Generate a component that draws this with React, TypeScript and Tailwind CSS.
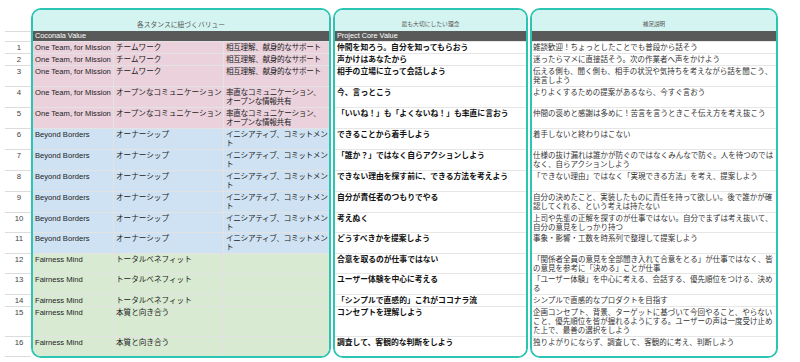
import React from 'react';

type Row = {
  a: string;
  b: string;
  c: string;
  d: string;
  e: string;
  bg: string;
  h: string;
};

const PINK = 'bg-[#ead1dc]';
const BLUE = 'bg-[#cfe2f3]';
const GREEN = 'bg-[#d9ead3]';

const OT = 'One Team, for Mission';
const BB = 'Beyond Borders';
const FM = 'Fairness Mind';
const INI = 'イニシアティブ、コミットメン\nト';
const OPEN = '率直なコミュニケーション、\nオープンな情報共有';

const rows: Row[] = [
  { a: OT, b: 'チームワーク', c: '相互理解、献身的なサポート', d: '仲間を知ろう。自分を知ってもらおう', e: '雑談歓迎！ちょっとしたことでも普段から話そう', bg: PINK, h: 'h-[12px]' },
  { a: OT, b: 'チームワーク', c: '相互理解、献身的なサポート', d: '声かけはあなたから', e: '迷ったらマメに直接話そう。次の作業者へ声をかけよう', bg: PINK, h: 'h-[12px]' },
  { a: OT, b: 'チームワーク', c: '相互理解、献身的なサポート', d: '相手の立場に立って会話しよう', e: '伝える側も、聞く側も、相手の状況や気持ちを考えながら話を聞こう、\n発言しよう', bg: PINK, h: 'h-[21px]' },
  { a: OT, b: 'オープンなコミュニケーション', c: OPEN, d: '今、言っとこう', e: 'よりよくするための提案があるなら、今すぐ言おう', bg: PINK, h: 'h-[21px]' },
  { a: OT, b: 'オープンなコミュニケーション', c: OPEN, d: '「いいね！」も「よくないね！」も率直に言おう', e: '仲間の褒めと感謝は多めに！苦言を言うときこそ伝え方を考え抜こう', bg: PINK, h: 'h-[21px]' },
  { a: BB, b: 'オーナーシップ', c: INI, d: 'できることから着手しよう', e: '着手しないと終わりはこない', bg: BLUE, h: 'h-[21px]' },
  { a: BB, b: 'オーナーシップ', c: INI, d: '「誰か？」ではなく自らアクションしよう', e: '仕様の抜け漏れは誰かが防ぐのではなくみんなで防ぐ。人を待つのでは\nなく、自らアクションしよう', bg: BLUE, h: 'h-[21px]' },
  { a: BB, b: 'オーナーシップ', c: INI, d: 'できない理由を探す前に、できる方法を考えよう', e: '「できない理由」ではなく「実現できる方法」を考え、提案しよう', bg: BLUE, h: 'h-[21px]' },
  { a: BB, b: 'オーナーシップ', c: INI, d: '自分が責任者のつもりでやる', e: '自分の決めたこと、実装したものに責任を持って欲しい。後で誰かが確\n認してくれる、という考えは持たない', bg: BLUE, h: 'h-[21px]' },
  { a: BB, b: 'オーナーシップ', c: INI, d: '考えぬく', e: '上司や先輩の正解を探すのが仕事ではない。自分でまずは考え抜いて、\n自分の意見をしっかり持つ', bg: BLUE, h: 'h-[20px]' },
  { a: BB, b: 'オーナーシップ', c: INI, d: 'どうすべきかを提案しよう', e: '事象・影響・工数を時系列で整理して提案しよう', bg: BLUE, h: 'h-[21px]' },
  { a: FM, b: 'トータルベネフィット', c: '', d: '合意を取るのが仕事ではない', e: '「関係者全員の意見を全部聞き入れて合意をとる」が仕事ではなく、皆\nの意見を参考に「決める」ことが仕事', bg: GREEN, h: 'h-[20px]' },
  { a: FM, b: 'トータルベネフィット', c: '', d: 'ユーザー体験を中心に考える', e: '「ユーザー体験」を中心に考える、会話する、優先順位をつける、決め\nる', bg: GREEN, h: 'h-[21px]' },
  { a: FM, b: 'トータルベネフィット', c: '', d: '「シンプルで直感的」これがココナラ流', e: 'シンプルで直感的なプロダクトを目指す', bg: GREEN, h: 'h-[12px]' },
  { a: FM, b: '本質と向き合う', c: '', d: 'コンセプトを理解しよう', e: '企画コンセプト、背景、ターゲットに基づいて今回やること、やらない\nこと、優先順位を皆が握れるようにする。ユーザーの声は一度受け止め\nた上で、最善の選択をしよう', bg: GREEN, h: 'h-[30px]' },
  { a: FM, b: '本質と向き合う', c: '', d: '調査して、客観的な判断をしよう', e: '独りよがりにならず、調査して、客観的に考え、判断しよう', bg: GREEN, h: 'h-[20px]' },
];

function Cell({ text, className }: { text: string; className: string }) {
  return (
    <div className={`overflow-hidden whitespace-pre pt-[1px] ${className}`}>
      {text}
    </div>
  );
}

function GroupHeader({ title, size }: { title: string; size: string }) {
  return (
    <div className={`h-[21px] bg-[#d4f4f1] flex items-end justify-center pb-[2px] text-[#555] ${size}`}>
      {title}
    </div>
  );
}

export default function App() {
  return (
    <div className="w-[800px] h-[362px] bg-white overflow-hidden flex items-start pt-[8px] font-['Liberation_Sans','Noto_Sans_CJK_JP',sans-serif] text-[7.6px] leading-[9px] text-[#222]">
      {/* row numbers */}
      <div className="w-[31px] shrink-0 flex flex-col pl-[5px]">
        <div className="h-[23px]" />
        <div className="h-[10px] border-t border-[#dcdcdc]" />
        {rows.map((r, i) => (
          <div
            key={i}
            className={`${r.h} border-t border-[#dcdcdc] flex justify-center items-start pt-[1px] pl-[2px] text-[#444] text-[7.8px]`}
          >
            {i + 1}
          </div>
        ))}
        <div className="border-t border-[#dcdcdc]" />
      </div>

      {/* group 1 */}
      <div className="w-[300px] shrink-0 rounded-[10px] border-2 border-[#2cc5b3] overflow-hidden flex flex-col">
        <GroupHeader title="各スタンスに紐づくバリュー" size="text-[6.8px]" />
        <div className="h-[10px] bg-[#595959] text-white text-[7.3px] leading-[10px] pl-[2px]">Coconala Value</div>
        {rows.map((r, i) => (
          <div key={i} className={`${r.h} ${r.bg} border-t border-[#e3e3e3] flex`}>
            <Cell text={r.a} className="w-[80px] pl-[2px]" />
            <Cell text={r.b} className="w-[110px] pl-[2px] border-l border-[#e3e3e3]" />
            <Cell text={r.c} className="flex-1 pl-[2px] border-l border-[#e3e3e3] tracking-[-0.3px]" />
          </div>
        ))}
      </div>

      {/* group 2 */}
      <div className="w-[195px] ml-[2px] shrink-0 rounded-[10px] border-2 border-[#2cc5b3] overflow-hidden flex flex-col">
        <GroupHeader title="最も大切にしたい理念" size="text-[5.8px]" />
        <div className="h-[10px] bg-[#595959] text-white text-[7.3px] leading-[10px] pl-[2px]">Project Core Value</div>
        {rows.map((r, i) => (
          <div key={i} className={`${r.h} bg-white border-t border-[#e6e6e6] flex`}>
            <Cell text={r.d} className="flex-1 pl-[2px] font-bold text-[#111] text-[7.8px]" />
          </div>
        ))}
      </div>

      {/* group 3 */}
      <div className="w-[248px] ml-[2px] shrink-0 rounded-[10px] border-2 border-[#2cc5b3] overflow-hidden flex flex-col">
        <GroupHeader title="補足説明" size="text-[5.6px]" />
        <div className="h-[10px] bg-[#595959]" />
        {rows.map((r, i) => (
          <div key={i} className={`${r.h} bg-white border-t border-[#e6e6e6] flex`}>
            <Cell text={r.e} className="flex-1 pl-[1px] text-[#333] text-[7.5px]" />
          </div>
        ))}
      </div>
    </div>
  );
}
